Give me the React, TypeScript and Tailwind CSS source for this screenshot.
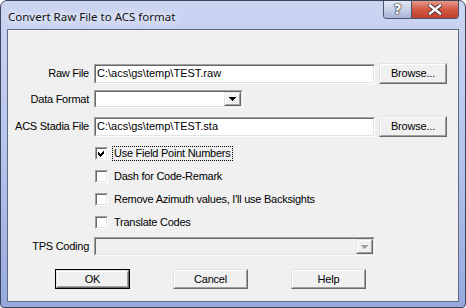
import React from 'react';

const sunken =
  'border border-t-[#a0a0a0] border-l-[#a0a0a0] border-b-white border-r-white';
const sunkenInner =
  'border border-t-[#696969] border-l-[#696969] border-b-[#e3e3e3] border-r-[#e3e3e3]';
const raised =
  'border border-t-[#e3e3e3] border-l-[#e3e3e3] border-b-[#696969] border-r-[#696969]';
const raisedInner =
  'border border-t-white border-l-white border-b-[#a0a0a0] border-r-[#a0a0a0]';

function Button({ label, w, h = 'h-[20px]', isDefault }: { label: string; w: string; h?: string; isDefault?: boolean }) {
  return (
    <div className={`${w} ${h} flex shrink-0 ${isDefault ? 'border border-black' : ''}`}>
      <div className={`${raised} flex-1 flex`}>
        <div className={`${raisedInner} flex-1 flex items-center justify-center bg-[#f0f0f0] tracking-[-0.2px]`}>{label}</div>
      </div>
    </div>
  );
}

function TextBox({ value, w }: { value: string; w: string }) {
  return (
    <div className={`${sunken} ${w} h-[20px] flex shrink-0`}>
      <div className={`${sunkenInner} flex-1 bg-white flex items-center pl-[1px] whitespace-nowrap`}>{value}</div>
    </div>
  );
}

function Arrow({ disabled }: { disabled?: boolean }) {
  return (
    <div className={`${raised} w-[17px] flex shrink-0`}>
      <div className={`${raisedInner} flex-1 flex items-center justify-center bg-[#f0f0f0]`}>
        <svg width="7" height="4" viewBox="0 0 7 4" shapeRendering="crispEdges">
          <polygon points="0,0 7,0 3.5,4" fill={disabled ? '#a0a0a0' : '#000'} />
        </svg>
      </div>
    </div>
  );
}

function Combo({ w, h, disabled }: { w: string; h: string; disabled?: boolean }) {
  return (
    <div className={`${sunken} ${w} ${h} flex shrink-0`}>
      <div className={`${sunkenInner} flex-1 flex ${disabled ? 'bg-[#f0f0f0]' : 'bg-white'}`}>
        <div className="flex-1" />
        <Arrow disabled={disabled} />
      </div>
    </div>
  );
}

function Check({ label, checked, focused }: { label: string; checked?: boolean; focused?: boolean }) {
  return (
    <div className="flex items-center h-[13px]">
      <div className={`${sunken} w-[13px] h-[13px] flex shrink-0`}>
        <div className={`${sunkenInner} flex-1 bg-white flex items-center justify-center`}>
          {checked && (
            <svg width="9" height="9" viewBox="0 0 9 9" shapeRendering="crispEdges">
              <polygon points="1,3 3,5 7,1 7,4 3,8 1,6" fill="#000" />
            </svg>
          )}
        </div>
      </div>
      <span
        className={`ml-[5px] px-[1px] leading-[13px] whitespace-nowrap tracking-[-0.25px] ${focused ? 'outline outline-1 outline-dotted outline-black' : ''}`}
      >
        {label}
      </span>
    </div>
  );
}

function Label({ text }: { text: string }) {
  return <div className="w-[81px] text-right shrink-0 mr-[5px] whitespace-nowrap tracking-[-0.25px]">{text}</div>;
}

export default function App() {
  return (
    <div className="w-[466px] h-[308px] bg-white">
      <div className="w-[466px] h-[308px] flex flex-col rounded-t-[7px] rounded-b-[4px] border border-[#3b4458] bg-gradient-to-b from-[#cbd5f2] via-[#b6c4ec] to-[#97a9dd] font-['Liberation_Sans',Arial,sans-serif] text-[11px] text-black overflow-hidden">
        <div className="h-[28px] flex shrink-0">
          <div className="pl-[7px] pt-[7px] text-[11.5px] font-['Noto_Sans',sans-serif] text-[#111] [text-shadow:0_0_6px_#fff,0_0_8px_#fff]">
            Convert Raw File to ACS format
          </div>
          <div className="flex-1" />
          <div className="flex mr-[6px] h-[19px] -mt-[1px] border border-t-0 border-[#4a5266] rounded-b-[4px] overflow-hidden">
            <div className="w-[28px] bg-gradient-to-b from-[#e4eaf6] via-[#c9d3ea] to-[#a5b4d6] flex items-center justify-center border-r border-[#4a5266]">
              <span className="text-white font-bold text-[14px] leading-none font-['DejaVu_Sans',sans-serif] [text-shadow:0_0_1px_#222,0_0_1px_#222,0_0_2px_#333]">?</span>
            </div>
            <div className="w-[46px] bg-gradient-to-b from-[#e6a294] via-[#d35a44] to-[#c0402a] flex items-center justify-center">
              <svg width="14" height="11" viewBox="0 0 14 11">
                <path d="M2 1.5 L12 9.5 M12 1.5 L2 9.5" stroke="#3a2a2a" strokeWidth="4.2" strokeLinecap="square" />
                <path d="M2 1.5 L12 9.5 M12 1.5 L2 9.5" stroke="#fff" strokeWidth="2.4" strokeLinecap="square" />
              </svg>
            </div>
          </div>
        </div>
        <div className="flex-1 mx-[6px] mb-[5px] border border-[#5f6b86] bg-[#f0f0f0] flex flex-col pt-[33px]">
          <div className="flex items-center h-[21px]">
            <Label text="Raw File" />
            <TextBox value="C:\acs\gs\temp\TEST.raw" w="w-[281px]" />
            <div className="ml-[4px]">
              <Button label="Browse..." w="w-[68px]" h="h-[21px]" />
            </div>
          </div>
          <div className="flex items-center h-[18px] mt-[6px]">
            <Label text="Data Format" />
            <Combo w="w-[149px]" h="h-[18px]" />
          </div>
          <div className="flex items-center h-[21px] mt-[8px]">
            <Label text="ACS Stadia File" />
            <TextBox value="C:\acs\gs\temp\TEST.sta" w="w-[281px]" />
            <div className="ml-[4px]">
              <Button label="Browse..." w="w-[68px]" h="h-[21px]" />
            </div>
          </div>
          <div className="flex flex-col pl-[87px] mt-[10px] gap-y-[10px]">
            <Check label="Use Field Point Numbers" checked focused />
            <Check label="Dash for Code-Remark" />
            <Check label="Remove Azimuth values, I'll use Backsights" />
            <Check label="Translate Codes" />
          </div>
          <div className="flex items-center h-[19px] mt-[8px]">
            <Label text="TPS Coding" />
            <Combo w="w-[281px]" h="h-[19px]" disabled />
          </div>
          <div className="flex mt-[13px] pl-[47px] gap-x-[43px]">
            <Button label="OK" w="w-[75px]" isDefault />
            <Button label="Cancel" w="w-[75px]" />
            <Button label="Help" w="w-[75px]" />
          </div>
        </div>
      </div>
    </div>
  );
}
